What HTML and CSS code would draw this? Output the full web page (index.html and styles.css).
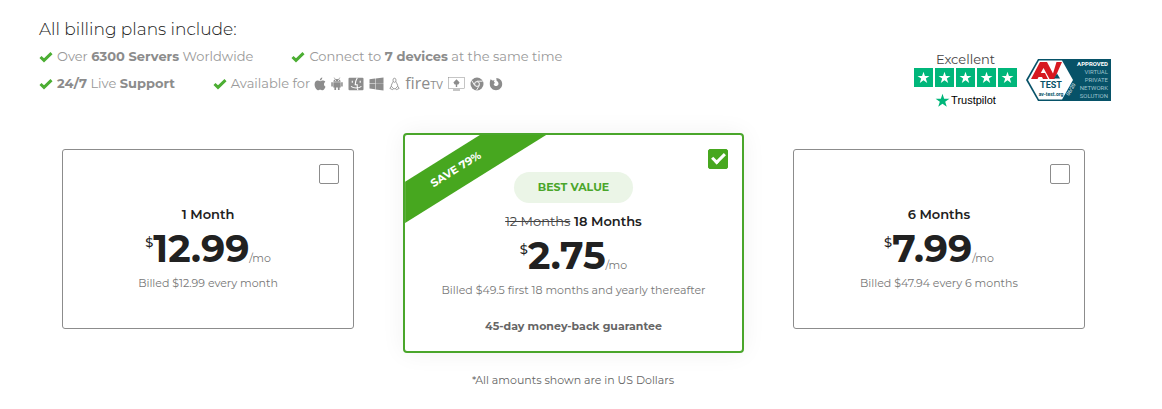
FILE: index.html
```html
<!DOCTYPE html>
<html lang="en">

<head>
    <meta charset="UTF-8">
    <meta name="viewport" content="width=device-width, initial-scale=1.0">
    <title>Billing plans</title>
    <link rel="stylesheet" href="styles.css">
</head>

<body>
    <!-- Shared symbols -->
    <svg class="symbols" width="0" height="0" aria-hidden="true">
        <symbol id="check" viewBox="0 0 14 12">
            <path d="M1.500 6 5 9.400 12.500 2.200" fill="none" stroke="currentColor" stroke-width="3" />
        </symbol>
        <symbol id="star" viewBox="0 0 20 20">
            <path d="m10 1 2.200 6.600h7L13.600 11.700l2.100 6.600L10 14.200l-5.700 4.100 2.100-6.600L.8 7.600h7z" fill="currentColor" />
        </symbol>
    </svg>

    <header class="top">
        <section class="includes">
            <h1>All billing plans include:</h1>
            <ul class="features">
                <li><svg class="check"><use href="#check" /></svg><span>Over <strong>6300 Servers</strong> Worldwide</span></li>
                <li><svg class="check"><use href="#check" /></svg><span>Connect to <strong>7 devices</strong> at the same time</span></li>
            </ul>
            <ul class="features">
                <li><svg class="check"><use href="#check" /></svg><span><strong>24/7</strong> Live <strong>Support</strong></span></li>
                <li>
                    <svg class="check"><use href="#check" /></svg><span>Available for</span>
                    <span class="platforms">
                        <!-- Apple -->
                        <svg width="12" height="14" viewBox="0 0 12 14">
                            <path d="M8.300.5c.1 1.500-1.100 2.900-2.500 2.900C5.700 2 6.900.7 8.300.5zM10 7.300c0-1.300.7-2 1.300-2.500-.8-1-1.800-1.200-2.500-1.200-1.100 0-1.800.6-2.600.6S4.600 3.600 3.700 3.600C1.900 3.600.6 5.200.6 7.600c0 2.700 1.800 5.600 3.300 5.600.8 0 1.300-.5 2.300-.5s1.400.5 2.200.5c1.500 0 2.700-2.200 3.100-3.500C10.500 9.200 10 8.400 10 7.300z" fill="currentColor" />
                        </svg>
                        <!-- Android -->
                        <svg width="12" height="14" viewBox="0 0 12 14">
                            <path d="M3.200.6 4.300 2.400M8.800.6 7.700 2.400" stroke="currentColor" stroke-width=".7" />
                            <path d="M2.300 4.800C2.400 1 9.600 1 9.700 4.800zM2.300 5.300h7.400v5.200H8.600V13H6.900v-2.500H5.100V13H3.400v-2.500H2.300zM.3 5.300h1.500v4.200H.3zM10.200 5.300h1.500v4.200h-1.500z" fill="currentColor" />
                            <circle cx="4.500" cy="3.500" r=".5" fill="#fff" />
                            <circle cx="7.500" cy="3.500" r=".5" fill="#fff" />
                        </svg>
                        <!-- Finder -->
                        <svg width="16" height="14" viewBox="0 0 16 14">
                            <rect x=".5" y=".8" width="15" height="12.400" rx="1" fill="currentColor" />
                            <path d="M9.300.8C7.900 3 7.400 5.200 7.200 7.700h2c-.1 2 .1 3.700.6 5.500M4.300 3.800v2M12.200 3.800v2M3 9.400c3 2.200 7.500 2.200 10.400 0" fill="none" stroke="#fff" stroke-width="1.100" />
                        </svg>
                        <!-- Windows -->
                        <svg width="15" height="14" viewBox="0 0 15 14">
                            <path d="M.5 2.300 6 1.600v5H.5zM6.500 1.500 14.500.5v6.200h-8zM.5 7.100H6v5.200l-5.500-.7zM6.500 7.100h8v6.300l-8-1z" fill="currentColor" />
                        </svg>
                        <!-- Linux -->
                        <svg width="11" height="14" viewBox="0 0 12 14">
                            <path d="M4.500 4.500C4.200 1.800 4.600.7 6 .7s1.800 1.100 1.500 3.800C8.400 6.200 9.500 7.600 9.600 9.800M4.500 4.500C3.600 6.200 2.500 7.600 2.400 9.800M4.600 4.300 6 5.200l1.400-.9M2.600 9.500.9 11.800l3 1.400.9-1.200zM9.400 9.500l1.700 2.300-3 1.400-.9-1.200zM4.600 12.200h2.800" fill="none" stroke="currentColor" stroke-width=".9" />
                        </svg>
                        <span class="fire">fire<small>TV</small></span>
                        <!-- Smart TV -->
                        <svg width="17" height="14" viewBox="0 0 17 14">
                            <rect x=".5" y=".5" width="16" height="11" fill="none" stroke="currentColor" stroke-width=".5" />
                            <path d="M8.500 2.200 11.600 5.600 10.300 7.600H9.200v2.500H7.800V7.600H6.700L5.400 5.600zM5 12.500h7v1H5z" fill="currentColor" />
                        </svg>
                        <!-- Chrome -->
                        <svg width="14" height="14" viewBox="0 0 14 14">
                            <circle cx="7" cy="7" r="6.500" fill="currentColor" />
                            <path d="M7 4.200h5.600M4.600 8.400 1.800 3.600M9.400 8.400 6.500 13.200" stroke="#fff" stroke-width=".9" />
                            <circle cx="7" cy="7" r="2.400" fill="currentColor" stroke="#fff" />
                        </svg>
                        <!-- Firefox -->
                        <svg width="14" height="14" viewBox="0 0 14 14">
                            <path d="M1.600 2.200 3.500 3.600 5.600 3.200 4.800 5l1.400.8-1.500 1.100c.2 1.700 1.700 2.500 3.100 2 2.500-.9 2.100-4-.2-5.200L7.300 1c3.200.1 5.900 2.500 5.900 6 0 3.400-2.700 6.200-6.200 6.200S.8 10.400.8 7c0-1.700.1-3.300.8-4.800z" fill="currentColor" />
                        </svg>
                    </span>
                </li>
            </ul>
        </section>

        <aside class="awards">
            <div class="trustpilot">
                <span class="rating">Excellent</span>
                <div class="stars">
                    <svg><use href="#star" /></svg>
                    <svg><use href="#star" /></svg>
                    <svg><use href="#star" /></svg>
                    <svg><use href="#star" /></svg>
                    <svg><use href="#star" /></svg>
                </div>
                <span class="brand"><svg><use href="#star" /></svg>Trustpilot</span>
            </div>
            <svg class="av-test" width="86" height="44" viewBox="0 0 86 44">
                <path d="M12 1h73v42H12L0 22z" fill="#075268" />
                <path d="M13 2.500h23L47 22 36 41.500H13L2 22z" fill="#fff" />
                <path d="M5 21 14 4h7l6 11.500L30.500 4H36l-7.500 17h-5l-6-11-6 11z" fill="#d71920" />
                <path d="M11 15h8l3 6h-5l-1-2h-5z" fill="#d71920" />
                <path d="m31 15.500 3 5h-6z" fill="#075268" />
                <text class="av-name" x="25" y="30" text-anchor="middle">TEST</text>
                <text class="av-url" x="25" y="38" text-anchor="middle">av-test.org</text>
                <text class="av-date" transform="translate(43 38) rotate(-60)">06/20</text>
                <g class="av-note" text-anchor="end">
                    <text class="av-bold" x="82" y="8">APPROVED</text>
                    <text x="82" y="16">VIRTUAL</text>
                    <text x="82" y="24">PRIVATE</text>
                    <text x="82" y="32">NETWORK</text>
                    <text x="82" y="40">SOLUTION</text>
                </g>
            </svg>
        </aside>
    </header>

    <main class="plans">
        <article class="plan">
            <input type="checkbox" id="plan-1" class="pick">
            <label for="plan-1" class="term">1 Month</label>
            <p class="price"><sup>$</sup><b>12.99</b><span>/mo</span></p>
            <p class="billed">Billed $12.99 every month</p>
        </article>

        <article class="plan best">
            <div class="ribbon"><span>SAVE 79%</span></div>
            <input type="checkbox" id="plan-18" class="pick" checked>
            <span class="badge">BEST VALUE</span>
            <label for="plan-18" class="term"><del>12 Months</del> 18 Months</label>
            <p class="price"><sup>$</sup><b>2.75</b><span>/mo</span></p>
            <p class="billed">Billed $49.5 first 18 months and yearly thereafter</p>
            <p class="guarantee">45-day money-back guarantee</p>
        </article>

        <article class="plan">
            <input type="checkbox" id="plan-6" class="pick">
            <label for="plan-6" class="term">6 Months</label>
            <p class="price"><sup>$</sup><b>7.99</b><span>/mo</span></p>
            <p class="billed">Billed $47.94 every 6 months</p>
        </article>
    </main>

    <p class="note">*All amounts shown are in US Dollars</p>
</body>

</html>
```

FILE: styles.css
```css
* {
    box-sizing: border-box;
}

body {
    margin: 0;
    padding: 16px 0;
    font-family: Montserrat, Inter, sans-serif;
    color: #212121;
    background: #fff;
}

h1,
p,
ul {
    margin: 0;
    padding: 0;
}

.symbols {
    position: absolute;
}

.top {
    display: flex;
    justify-content: space-between;
    padding: 0 50px 0 39px;
}

h1 {
    font-size: 17px;
    font-weight: 300;
    line-height: 27px;
    color: #222;
}

.features {
    display: flex;
    gap: 38px;
    list-style: none;
    font-size: 13px;
    font-weight: 400;
    line-height: 27px;
    color: #999;
}

.features li {
    display: flex;
    align-items: center;
    gap: 4px;
}

.features strong {
    font-weight: 700;
    color: #8c8c8c;
}

.check {
    width: 14px;
    height: 12px;
    color: #4cae33;
}

.platforms {
    display: flex;
    align-items: center;
    gap: 5px;
    color: #8c8c8c;
}

.fire {
    font-family: "Open Sans", sans-serif;
    font-size: 16px;
    font-weight: 400;
    line-height: 20px;
}

.fire small {
    font-size: 11px;
}

.awards {
    display: flex;
    align-items: flex-start;
    gap: 9px;
    padding-top: 35px;
}

.trustpilot {
    display: flex;
    flex-direction: column;
    align-items: center;
}

.rating {
    font-size: 13px;
    font-weight: 400;
    line-height: 17px;
    color: #444;
}

.stars {
    display: flex;
    gap: 2px;
}

.stars svg {
    width: 19px;
    height: 19px;
    padding: 3px;
    color: #fff;
    background: #00b67a;
}

.brand {
    display: flex;
    align-items: center;
    gap: 1px;
    font-family: "Liberation Sans", Arial, sans-serif;
    font-size: 11px;
    line-height: 26px;
    color: #000;
}

.brand svg {
    width: 15px;
    height: 15px;
    color: #00b67a;
}

.av-test {
    margin-top: 7px;
    font-family: Roboto, sans-serif;
}

.av-name {
    font-size: 9px;
    font-weight: 700;
    fill: #075268;
}

.av-url {
    font-size: 5px;
    font-weight: 700;
    fill: #075268;
}

.av-date {
    font-size: 5px;
    fill: #fff;
}

.av-note {
    font-size: 6px;
    fill: #9dc3ce;
}

.av-bold {
    font-weight: 700;
    fill: #fff;
}

.plans {
    display: grid;
    grid-template-columns: 6fr 7fr 6fr;
    align-items: start;
    gap: 49px;
    padding: 20px 77px 0 62px;
}

.plan {
    position: relative;
    display: flex;
    flex-direction: column;
    align-items: center;
    margin-top: 16px;
    padding: 54px 0 34px;
    border: 1px solid #8c8c8c;
    border-radius: 3px;
}

.best {
    margin-top: 0;
    padding: 37px 0 14px;
    border: 2px solid #4aa62b;
    border-radius: 4px;
    box-shadow: 0 0 24px rgba(0, 0, 0, 0.06);
}

.pick {
    position: absolute;
    top: 14px;
    right: 14px;
    width: 20px;
    height: 20px;
    margin: 0;
    appearance: none;
    border: 1px solid #8c8c8c;
    border-radius: 2px;
    background: #fff;
}

.pick:checked {
    border-color: #47a71f;
    background: #47a71f;
}

.pick:checked::before {
    content: "";
    display: block;
    box-sizing: border-box;
    width: 13px;
    height: 8px;
    margin: 3px 0 0 3px;
    border: solid #fff;
    border-width: 0 0 3px 3px;
    transform: rotate(-45deg);
}

.ribbon {
    position: absolute;
    top: 0;
    left: 0;
    display: flex;
    align-items: center;
    width: 141px;
    height: 88px;
    padding: 0 0 20px 22px;
    background: #47a71f;
    clip-path: polygon(0 53%, 53% 0, 100% 0, 0 100%);
}

.ribbon span {
    font-size: 11px;
    font-weight: 700;
    color: #fff;
    transform: rotate(-32deg);
}

.badge {
    margin-bottom: 8px;
    padding: 0 24px;
    border-radius: 16px;
    font-size: 11px;
    font-weight: 700;
    line-height: 31px;
    color: #4aa62b;
    background: #ebf5e7;
}

.term {
    font-size: 13px;
    font-weight: 600;
    line-height: 20px;
}

.term del {
    font-weight: 400;
    color: #444;
}

.price {
    display: flex;
    align-items: baseline;
    height: 49px;
    line-height: 50px;
}

.price sup {
    align-self: flex-start;
    font-size: 13px;
    font-weight: 500;
    line-height: 36px;
}

.price b {
    font-size: 38px;
    font-weight: 700;
}

.price span {
    font-size: 11px;
    font-weight: 400;
    color: #777;
}

.billed {
    font-size: 11px;
    font-weight: 400;
    line-height: 21px;
    color: #777;
}

.guarantee {
    margin-top: 15px;
    font-size: 11px;
    font-weight: 700;
    line-height: 21px;
    color: #666;
}

.note {
    padding: 17px 16px 0 0;
    font-size: 11px;
    font-weight: 400;
    line-height: 20px;
    text-align: center;
    color: #666;
}
```
